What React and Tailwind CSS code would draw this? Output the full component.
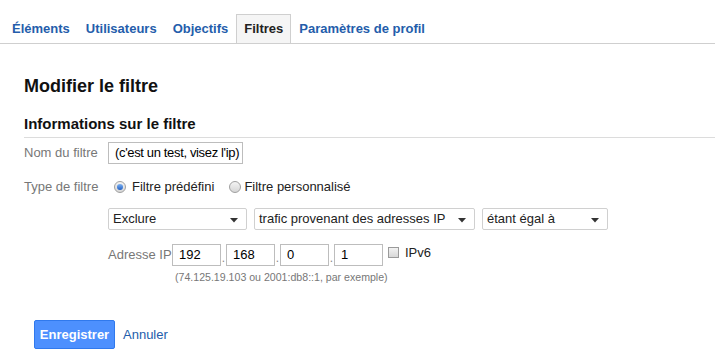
import React from 'react';

const tabs = ['Éléments', 'Utilisateurs', 'Objectifs', 'Filtres', 'Paramètres de profil'];

// small dark triangle used by the fake selects
const Caret = () => (
  <svg width="8" height="5" viewBox="0 0 8 5" className="mt-[2px] shrink-0">
    <path d="M0 0 L8 0 L4 4.5 Z" fill="#333" />
  </svg>
);

const Select = ({ label, width }) => (
  <div
    className={`flex items-center justify-between h-[22px] border border-[#d0d0d0] rounded-[2px] bg-white pl-[4px] pr-[8px] text-[13px] text-[#222] whitespace-nowrap shrink-0 ${width}`}
  >
    <span>{label}</span>
    <Caret />
  </div>
);

const Radio = ({ checked }) => (
  <span className="w-[12px] h-[12px] rounded-full border border-[#a0a0a0] bg-gradient-to-b from-[#f4f4f4] to-[#d6d6d6] flex items-center justify-center shrink-0">
    {checked && <span className="w-[6px] h-[6px] rounded-full bg-gradient-to-b from-[#7fb2f0] to-[#1f5fc4]" />}
  </span>
);

const IpBox = ({ value }) => (
  <div className="w-[49px] h-[22px] shrink-0 border border-[#bdbdbd] px-[6px] flex items-center text-[13px] text-black">
    {value}
  </div>
);

const Dot = () => <span className="w-[5px] shrink-0 text-center text-[12px] text-[#888] self-end leading-[16px]">.</span>;

const Label = ({ children }) => (
  <div className="w-[84px] shrink-0 pr-[11px] text-right text-[13px] text-[#777] whitespace-nowrap">{children}</div>
);

export default function App() {
  return (
    <div className="w-[715px] h-[363px] bg-white overflow-hidden font-['Liberation_Sans',Arial,sans-serif]">
      {/* tabs */}
      <nav className="flex h-[44px] pt-[14px] pl-1 border-b border-[#cfcfcf]">
        {tabs.map(t => {
          const active = t === 'Filtres';
          return (
            <div
              key={t}
              className={`flex items-center h-[29px] px-[7px] border border-b-0 text-[13px] font-bold ${
                active ? 'border-[#cfcfcf] bg-[#f5f5f5] text-[#222]' : 'border-transparent text-[#245dab]'
              }`}
            >
              {t}
            </div>
          );
        })}
      </nav>

      <div className="pl-6">
        <h1 className="mt-[31px] text-[18px] leading-[22px] font-bold text-[#111]">Modifier le filtre</h1>
        <h2 className="mt-[18px] pb-[4px] text-[15px] leading-[18px] font-bold text-[#111] border-b border-[#dcdcdc]">
          Informations sur le filtre
        </h2>

        {/* name */}
        <div className="flex items-center mt-[4px] h-[22px]">
          <Label>Nom du filtre</Label>
          <div className="w-[135px] h-[22px] shrink-0 border border-[#bdbdbd] pl-[6px] pr-[1px] flex items-center text-[13px] tracking-[-0.35px] text-black whitespace-nowrap">
            (c'est un test, visez l'ip)
          </div>
        </div>

        {/* type */}
        <div className="flex items-center mt-[12px] h-[22px]">
          <Label>Type de filtre</Label>
          <div className="flex items-center text-[13px] text-[#222] whitespace-nowrap">
            <span className="ml-[6px]"><Radio checked /></span>
            <span className="ml-[6px]">Filtre prédéfini</span>
            <span className="ml-[15px]"><Radio /></span>
            <span className="ml-[3px]">Filtre personnalisé</span>
          </div>
        </div>

        {/* selects */}
        <div className="flex gap-[7px] mt-[10px] ml-[84px]">
          <Select label="Exclure" width="w-[139px]" />
          <Select label="trafic provenant des adresses IP" width="w-[221px]" />
          <Select label="étant égal à" width="w-[126px]" />
        </div>

        {/* ip */}
        <div className="ml-[84px] mt-[14px]">
          <div className="flex items-center h-[22px]">
            <span className="text-[13px] text-[#777] w-[64px] shrink-0 whitespace-nowrap">Adresse IP</span>
            <IpBox value="192" />
            <Dot />
            <IpBox value="168" />
            <Dot />
            <IpBox value="0" />
            <Dot />
            <IpBox value="1" />
            <span className="ml-[5px] shrink-0 self-start mt-[3px] w-[11px] h-[11px] border border-[#9a9a9a] bg-gradient-to-b from-[#f2f2f2] to-[#d8d8d8]" />
            <span className="ml-[6px] self-start text-[13px] text-[#222] leading-[16px] mt-[1px]">IPv6</span>
          </div>
          <div className="ml-[67px] mt-[4px] text-[10.6px] leading-[14px] text-[#777] whitespace-nowrap">
            (74.125.19.103 ou 2001:db8::1, par exemple)
          </div>
        </div>

        {/* actions */}
        <div className="flex items-center mt-[36px] ml-[10px] gap-[8px]">
          <button className="h-[29px] w-[81px] rounded-[2px] border border-[#3079ed] bg-[#4d90fe] text-white text-[13px] font-bold">
            Enregistrer
          </button>
          <span className="text-[13px] text-[#245dab]">Annuler</span>
        </div>
      </div>
    </div>
  );
}
